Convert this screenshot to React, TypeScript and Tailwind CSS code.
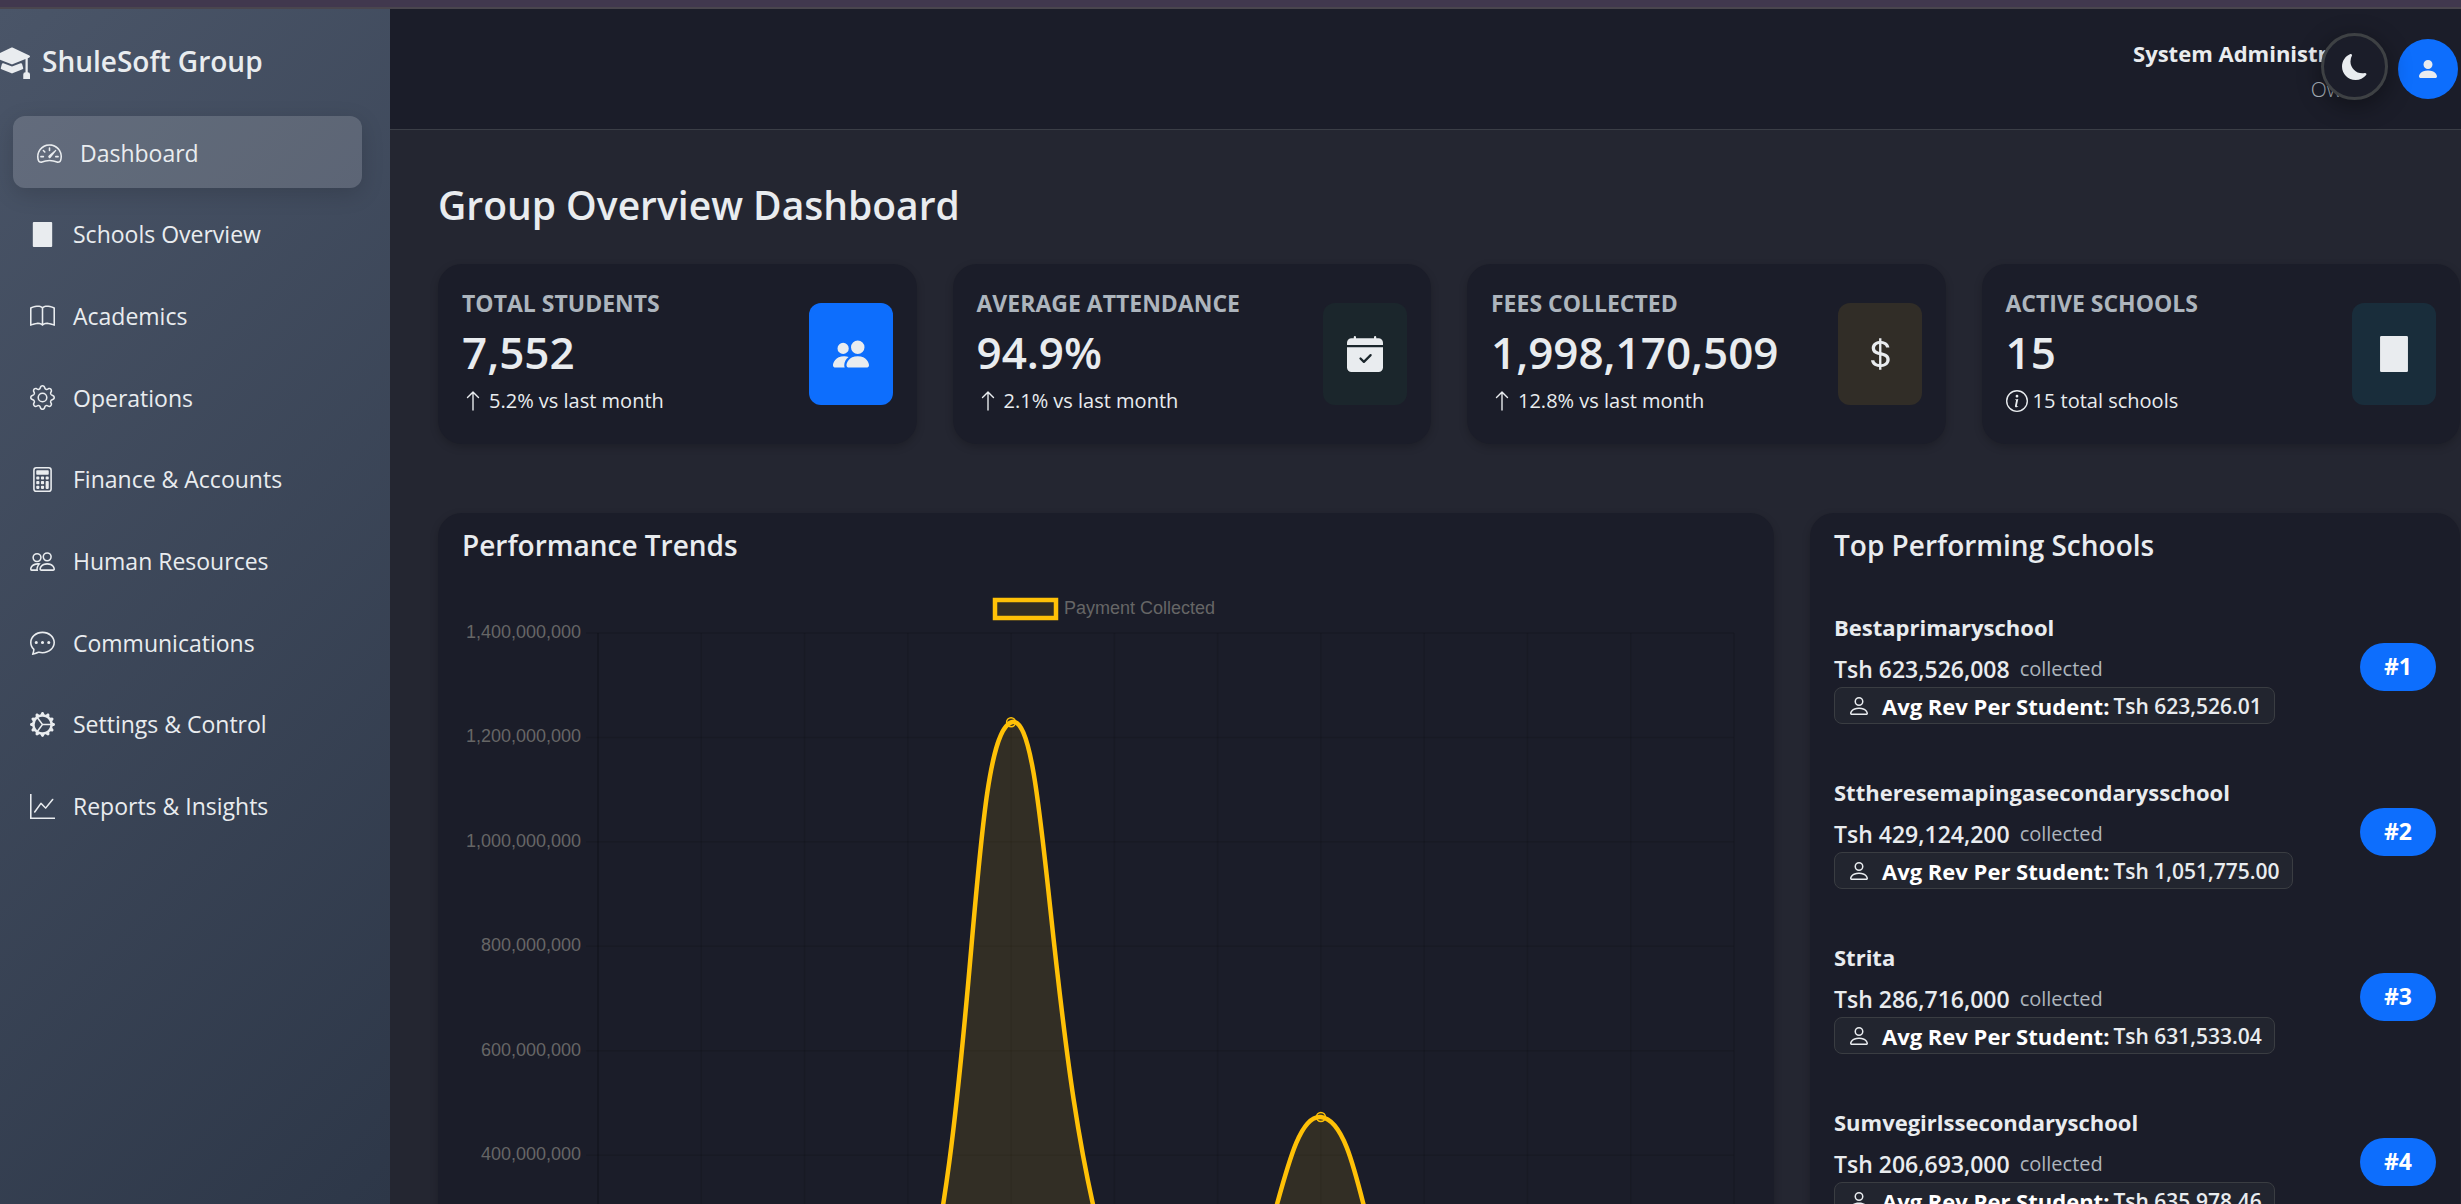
import React from "react";
import type { IconType } from "react-icons";
import {
  BsArrowUp,
  BsBook,
  BsCalculator,
  BsCalendarCheckFill,
  BsChatDots,
  BsCurrencyDollar,
  BsGear,
  BsGearWideConnected,
  BsGraphUp,
  BsInfoCircle,
  BsMoonFill,
  BsMortarboardFill,
  BsPeople,
  BsPeopleFill,
  BsPerson,
  BsPersonFill,
  BsSpeedometer2,
} from "react-icons/bs";

type IconComponent = IconType | React.FC<{ className?: string }>;

function BuildingSolid({ className }: { className?: string }) {
  return (
    <svg viewBox="0 0 16 16" fill="currentColor" className={className} aria-hidden="true">
      <rect x="1.8" y="0" width="12.4" height="16" rx="0.6" />
    </svg>
  );
}

const navItems: { label: string; icon: IconComponent }[] = [
  { label: "Dashboard", icon: BsSpeedometer2 },
  { label: "Schools Overview", icon: BuildingSolid },
  { label: "Academics", icon: BsBook },
  { label: "Operations", icon: BsGear },
  { label: "Finance & Accounts", icon: BsCalculator },
  { label: "Human Resources", icon: BsPeople },
  { label: "Communications", icon: BsChatDots },
  { label: "Settings & Control", icon: BsGearWideConnected },
  { label: "Reports & Insights", icon: BsGraphUp },
];

const stats: { label: string; value: string; note: string; noteIcon: IconComponent; icon: IconComponent; tile: string }[] = [
  { label: "Total Students", value: "7,552", note: "5.2% vs last month", noteIcon: BsArrowUp, icon: BsPeopleFill, tile: "bg-[#0d6efd]" },
  { label: "Average Attendance", value: "94.9%", note: "2.1% vs last month", noteIcon: BsArrowUp, icon: BsCalendarCheckFill, tile: "bg-[#1b262c]" },
  { label: "Fees Collected", value: "1,998,170,509", note: "12.8% vs last month", noteIcon: BsArrowUp, icon: BsCurrencyDollar, tile: "bg-[#312d27]" },
  { label: "Active Schools", value: "15", note: "15 total schools", noteIcon: BsInfoCircle, icon: BuildingSolid, tile: "bg-[#192d3b]" },
];

const schools = [
  { name: "Bestaprimaryschool", collected: "Tsh 623,526,008", average: "Tsh 623,526.01" },
  { name: "Sttheresemapingasecondarysschool", collected: "Tsh 429,124,200", average: "Tsh 1,051,775.00" },
  { name: "Strita", collected: "Tsh 286,716,000", average: "Tsh 631,533.04" },
  { name: "Sumvegirlssecondaryschool", collected: "Tsh 206,693,000", average: "Tsh 635,978.46" },
];

const plot = { left: 136, right: 1272, top: 48, bottom: 779, max: 1400 };
const payments = [0, 0, 0, 0, 1229, 155, 45, 473, 0, 0, 0, 0];

function px(index: number) {
  return plot.left + ((plot.right - plot.left) * index) / (payments.length - 1);
}

function py(value: number) {
  return plot.bottom - ((plot.bottom - plot.top) * value) / plot.max;
}

function clampY(y: number) {
  return Math.min(plot.bottom, Math.max(plot.top, y));
}

/* Cubic spline through the monthly payments, tension 0.4. */
function buildCurve() {
  const pts = payments.map((v, i) => ({ x: px(i), y: py(v) }));
  const handles = pts.map((cur, i) => {
    const prev = pts[Math.max(0, i - 1)];
    const next = pts[Math.min(pts.length - 1, i + 1)];
    const before = Math.hypot(cur.x - prev.x, cur.y - prev.y);
    const after = Math.hypot(next.x - cur.x, next.y - cur.y);
    const fa = (0.4 * before) / (before + after);
    const fb = (0.4 * after) / (before + after);
    return {
      inX: cur.x - fa * (next.x - prev.x),
      inY: clampY(cur.y - fa * (next.y - prev.y)),
      outX: cur.x + fb * (next.x - prev.x),
      outY: clampY(cur.y + fb * (next.y - prev.y)),
    };
  });
  let d = "M" + pts[0].x + " " + pts[0].y;
  for (let i = 1; i < pts.length; i++) {
    const a = handles[i - 1];
    const b = handles[i];
    d += " C" + [a.outX, a.outY, b.inX, b.inY, pts[i].x, pts[i].y].join(" ");
  }
  return d;
}

function TrendChart() {
  const curve = buildCurve();
  const ticks = [1400, 1200, 1000, 800, 600, 400, 200, 0];
  return (
    <svg viewBox="0 0 1288 800" className="w-full" role="img" aria-label="Payment Collected by month" fontFamily="'Liberation Sans', Arial, sans-serif" fontSize="18" fill="#666666">
      {ticks.map((t) => (
        <g key={t}>
          <line x1={plot.left - 12} x2={plot.right} y1={py(t)} y2={py(t)} stroke="#000000" strokeOpacity="0.1" strokeWidth="1.5" />
          <text x="119" y={py(t) + 5} textAnchor="end">
            {(t * 1000000).toLocaleString("en-US")}
          </text>
        </g>
      ))}
      {payments.map((_, i) => (
        <line key={i} x1={px(i)} x2={px(i)} y1={plot.top} y2={plot.bottom} stroke="#000000" strokeOpacity={i === 0 ? 0.25 : 0.1} strokeWidth="1.5" />
      ))}
      <path d={curve + " Z"} fill="#ffc107" fillOpacity="0.1" />
      <path d={curve} fill="none" stroke="#ffc107" strokeWidth="4.5" strokeLinejoin="round" />
      {payments.map((v, i) => (
        <circle key={i} cx={px(i)} cy={py(v)} r="4.5" fill="#ffc107" fillOpacity="0.1" stroke="#ffc107" strokeWidth="1.5" />
      ))}
      <rect x="533" y="15" width="61" height="18" fill="#ffc107" fillOpacity="0.1" stroke="#ffc107" strokeWidth="4.5" />
      <text x="602" y="29">Payment Collected</text>
    </svg>
  );
}

export default function App() {
  return (
    <div className="flex h-screen flex-col overflow-hidden bg-[#242631] font-['Open_Sans',sans-serif] text-[#e9ecef]">
      <div className="h-[9px] shrink-0 border-b-2 border-[#4a464e] bg-[#41384e]" />
      <div className="flex min-h-0 flex-1">
        <aside className="w-[390px] shrink-0 bg-[linear-gradient(135deg,#4a5568_0%,#2d3748_100%)]">
          <div className="flex h-[107px] items-center pb-1">
            <BsMortarboardFill className="-ml-1.5 size-9 shrink-0" />
            <span className="ml-3 text-[28px] leading-9 font-semibold">ShuleSoft Group</span>
          </div>
          <nav aria-label="Main" className="flex h-[725px] flex-col justify-between">
            {navItems.map(({ label, icon: Icon }, i) => (
              <a
                key={label}
                href="#"
                aria-current={i === 0 ? "page" : undefined}
                className={
                  i === 0
                    ? "mr-7 ml-[13px] flex h-[72px] items-center gap-[18px] rounded-xl bg-white/15 pt-0.5 pl-6 text-[23px] shadow-[0_6px_22px_rgba(0,0,0,0.15)]"
                    : "mr-7 ml-[13px] flex h-[72px] items-center gap-[18px] rounded-xl pt-0.5 pl-[17px] text-[23px]"
                }
              >
                <Icon className="size-[25px] shrink-0" />
                {label}
              </a>
            ))}
          </nav>
        </aside>

        <div className="flex min-w-0 flex-1 flex-col">
          <header className="relative flex h-[121px] shrink-0 items-center justify-end border-b border-[#3b3e46] bg-[#1b1d29] pr-[3px]">
            <div className="mr-6 pt-1 text-right">
              <p className="text-[22px] leading-9 font-bold">System Administrator</p>
              <p className="text-[21px] leading-9 font-light text-[#adb5bd]">Owner</p>
            </div>
            <button type="button" aria-label="Account" className="flex size-15 items-center justify-center rounded-full bg-[#0d6efd]">
              <BsPersonFill className="size-6" />
            </button>
            <button
              type="button"
              aria-label="Toggle dark mode"
              className="absolute top-6 right-[73px] flex size-[67px] items-center justify-center rounded-full border-3 border-[#3e4144] bg-[#1b1d29] shadow-[0_6px_24px_rgba(0,0,0,0.4)]"
            >
              <BsMoonFill className="size-[26px]" />
            </button>
          </header>

          <main className="min-h-0 flex-1 overflow-hidden pt-[51px] pr-px pl-12">
            <h1 className="text-[39px] leading-[48px] font-semibold">Group Overview Dashboard</h1>

            <section aria-label="Key figures" className="mt-[35px] grid grid-cols-4 gap-9">
              {stats.map(({ label, value, note, noteIcon: NoteIcon, icon: Icon, tile }) => (
                <article key={label} className="flex items-center justify-between rounded-3xl bg-[#1b1d29] p-6 shadow-[0_3px_8px_rgba(0,0,0,0.2)]">
                  <div>
                    <h2 className="mb-1 text-[23px] leading-[30px] font-bold text-[#adb5bd] uppercase">{label}</h2>
                    <p className="text-[44px] leading-[60px] font-semibold">{value}</p>
                    <p className="flex items-center gap-[5px] text-[20px] leading-[38px]">
                      <NoteIcon className="size-[22px]" />
                      {note}
                    </p>
                  </div>
                  <div className={"flex h-[102px] w-[84px] shrink-0 items-center justify-center rounded-xl " + tile}>
                    <Icon className="size-9" />
                  </div>
                </article>
              ))}
            </section>

            <div className="mt-[69px] grid grid-cols-3 gap-9">
              <section className="col-span-2 rounded-3xl bg-[#1b1d29] px-6 pt-3.5 pb-6 shadow-[0_3px_8px_rgba(0,0,0,0.2)]">
                <h2 className="mb-[22px] text-[28px] leading-9 font-semibold">Performance Trends</h2>
                <TrendChart />
              </section>

              <section className="rounded-3xl bg-[#1b1d29] px-6 pt-3.5 pb-6 shadow-[0_3px_8px_rgba(0,0,0,0.2)]">
                <h2 className="mb-[46px] text-[28px] leading-9 font-semibold">Top Performing Schools</h2>
                <ol className="flex flex-col gap-[50px]">
                  {schools.map((school, i) => (
                    <li key={school.name} className="flex items-center justify-between">
                      <div>
                        <h3 className="mb-1.5 text-[22px] leading-9 font-bold">{school.name}</h3>
                        <p className="flex gap-2.5 leading-9">
                          <span className="text-[23px] font-semibold">{school.collected}</span>
                          <span className="text-[20px] text-[#adb5bd]">collected</span>
                        </p>
                        <p className="flex h-[37px] w-fit items-center rounded-lg border border-[#3a3d42] bg-[#22252f] px-3">
                          <BsPerson className="mr-[11px] size-6" />
                          <strong className="mr-1 text-[22px] leading-8 font-bold text-white">Avg Rev Per Student:</strong>
                          <span className="text-[21px] leading-8 font-semibold">{school.average}</span>
                        </p>
                      </div>
                      <span className="flex h-12 w-[76px] items-center justify-center rounded-full bg-[#0d6efd] text-[23px] font-bold text-white">#{i + 1}</span>
                    </li>
                  ))}
                </ol>
              </section>
            </div>
          </main>
        </div>
      </div>
    </div>
  );
}
